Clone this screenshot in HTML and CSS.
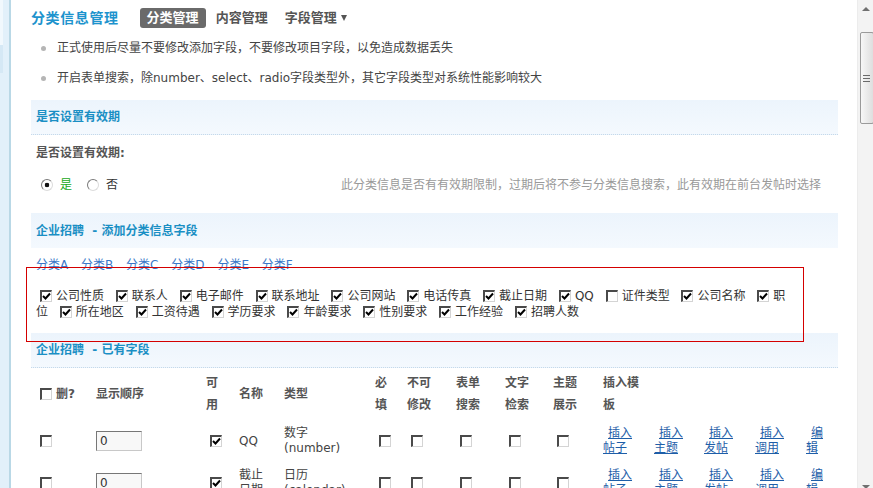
FILE: index.html
```html
<!DOCTYPE html>
<html lang="zh-CN">
<head>
<meta charset="UTF-8">
<title>分类信息管理</title>
<link rel="stylesheet" href="styles.css">
</head>
<body>
<div class="frame">
    <div class="side">
        <div class="side-a"></div>
        <div class="side-b"></div>
    </div>
    <div class="main">
        <div class="nav">
            <h3 class="title">分类信息管理</h3>
            <a class="tab tab-on" href="#">分类管理</a>
            <a class="tab" href="#">内容管理</a>
            <a class="tab" href="#">字段管理<span class="caret"></span></a>
        </div>
        <ul class="tips">
            <li>正式使用后尽量不要修改添加字段，不要修改项目字段，以免造成数据丢失</li>
            <li>开启表单搜索，除number、select、radio字段类型外，其它字段类型对系统性能影响较大</li>
        </ul>

        <div class="bar bar-first">是否设置有效期</div>
        <div class="setting">
            <div class="setting-label">是否设置有效期:</div>
            <div class="setting-row">
                <label class="radio yes"><input type="radio" name="expire" checked>是</label>
                <label class="radio"><input type="radio" name="expire">否</label>
                <span class="note">此分类信息是否有有效期限制，过期后将不参与分类信息搜索，此有效期在前台发帖时选择</span>
            </div>
        </div>

        <div class="bar bar-plain">企业招聘&nbsp; - 添加分类信息字段</div>
        <div class="subtabs">
            <a href="#">分类A</a>
            <a href="#">分类B</a>
            <a href="#">分类C</a>
            <a href="#">分类D</a>
            <a href="#">分类E</a>
            <a href="#">分类F</a>
        </div>
        <div class="fields">
            <label><input type="checkbox" checked>公司性质</label>
            <label><input type="checkbox" checked>联系人</label>
            <label><input type="checkbox" checked>电子邮件</label>
            <label><input type="checkbox" checked>联系地址</label>
            <label><input type="checkbox" checked>公司网站</label>
            <label><input type="checkbox" checked>电话传真</label>
            <label><input type="checkbox" checked>截止日期</label>
            <label><input type="checkbox" checked>QQ</label>
            <label><input type="checkbox">证件类型</label>
            <label><input type="checkbox" checked>公司名称</label>
            <label><input type="checkbox" checked>职位</label>
            <label><input type="checkbox" checked>所在地区</label>
            <label><input type="checkbox" checked>工资待遇</label>
            <label><input type="checkbox" checked>学历要求</label>
            <label><input type="checkbox" checked>年龄要求</label>
            <label><input type="checkbox" checked>性别要求</label>
            <label><input type="checkbox" checked>工作经验</label>
            <label><input type="checkbox" checked>招聘人数</label>
        </div>

        <div class="bar">企业招聘&nbsp; - 已有字段</div>
        <table class="fieldlist">
            <colgroup>
                <col style="width:56px"><col style="width:110px"><col style="width:33px">
                <col style="width:45px"><col style="width:91px"><col style="width:32px">
                <col style="width:49px"><col style="width:49px"><col style="width:48px">
                <col style="width:50px"><col style="width:51px"><col style="width:50px">
                <col style="width:51px"><col style="width:51px"><col style="width:36px">
            </colgroup>
            <tr>
                <th><input type="checkbox" class="cb-first">删?</th>
                <th>显示顺序</th>
                <th>可用</th>
                <th>名称</th>
                <th>类型</th>
                <th>必填</th>
                <th>不可修改</th>
                <th>表单搜索</th>
                <th>文字检索</th>
                <th>主题展示</th>
                <th class="th-tpl">插入模板</th>
                <th></th><th></th><th></th><th></th>
            </tr>
            <tr>
                <td><input type="checkbox" class="cb-first"></td>
                <td><input type="text" class="order" value="0"></td>
                <td><input type="checkbox" checked></td>
                <td>QQ</td>
                <td>数字(number)</td>
                <td><input type="checkbox"></td>
                <td><input type="checkbox"></td>
                <td><input type="checkbox"></td>
                <td><input type="checkbox"></td>
                <td><input type="checkbox"></td>
                <td class="lnk"><a href="#">插入帖子</a></td>
                <td class="lnk"><a href="#">插入主题</a></td>
                <td class="lnk"><a href="#">插入发帖</a></td>
                <td class="lnk"><a href="#">插入调用</a></td>
                <td class="lnk"><a href="#">编辑</a></td>
            </tr>
            <tr>
                <td><input type="checkbox" class="cb-first"></td>
                <td><input type="text" class="order" value="0"></td>
                <td><input type="checkbox" checked></td>
                <td>截止日期</td>
                <td>日历(calendar)</td>
                <td><input type="checkbox"></td>
                <td><input type="checkbox"></td>
                <td><input type="checkbox"></td>
                <td><input type="checkbox"></td>
                <td><input type="checkbox"></td>
                <td class="lnk"><a href="#">插入帖子</a></td>
                <td class="lnk"><a href="#">插入主题</a></td>
                <td class="lnk"><a href="#">插入发帖</a></td>
                <td class="lnk"><a href="#">插入调用</a></td>
                <td class="lnk"><a href="#">编辑</a></td>
            </tr>
        </table>
    </div>
</div>

<div class="mark"></div>

<div class="scroll">
    <span class="scroll-up"></span>
    <div class="thumb"><i></i><i></i><i></i></div>
    <span class="scroll-down"></span>
</div>
</body>
</html>
```

FILE: styles.css
```css
html, body {
    margin: 0;
    padding: 0;
}
body {
    width: 873px;
    height: 488px;
    overflow: hidden;
    position: relative;
    font: 12px "DejaVu Sans", "Noto Sans CJK SC", sans-serif;
    color: #333;
    background: #fff;
}
a {
    text-decoration: none;
}
.frame {
    display: flex;
    height: 488px;
}
.side {
    flex: none;
    width: 9px;
    background: #e2f0fa;
    border-right: 2px solid #b9d8e6;
}
.side-a {
    width: 3px;
    height: 45px;
    background: #f1f8fd;
}
.side-b {
    width: 3px;
    height: 28px;
    background: #d5e8f5;
}
.main {
    flex: 1;
    padding: 0 35px 0 20px;
}

/* 顶部导航 */
.nav {
    display: flex;
    align-items: center;
    height: 22px;
    padding-top: 7px;
}
.title {
    margin: 0 21px 0 0;
    font-size: 14px;
    letter-spacing: 0.6px;
    line-height: 22px;
    color: #1d93cd;
}
.tab {
    font-size: 13px;
    font-weight: bold;
    line-height: 20px;
    color: #555;
    padding: 0 7px;
    margin-right: 3px;
    border-radius: 3px;
}
.tab-on {
    background: #6a6a6a;
    color: #fff;
}
.caret {
    display: inline-block;
    border-left: 3px solid transparent;
    border-right: 3px solid transparent;
    border-top: 6px solid #555;
    margin-left: 4px;
    vertical-align: 1px;
}

/* 提示 */
.tips {
    list-style: none;
    margin: 4px 0 0;
    padding: 0;
}
.tips li {
    line-height: 30px;
    color: #444;
}
.tips li::before {
    content: "";
    display: inline-block;
    width: 5px;
    height: 5px;
    border-radius: 50%;
    background: #b5b5b5;
    margin: 0 11px 0 10px;
    vertical-align: middle;
}

/* 标题栏 */
.bar {
    height: 34px;
    line-height: 35px;
    padding-left: 5px;
    background: linear-gradient(#ecf4fc, #f4f9fe);
    border-bottom: 1px dotted #c5d9ea;
    color: #1a8fc4;
    font-weight: bold;
}
.bar-first {
    margin-top: 7px;
}
.bar-plain {
    height: 35px;
    line-height: 36px;
    border-bottom: none;
}

/* 有效期设置 */
.setting {
    padding: 8px 5px 18px;
}
.setting-label {
    line-height: 20px;
    font-weight: bold;
    color: #555;
}
.setting-row {
    display: flex;
    align-items: center;
    margin-top: 12px;
    line-height: 20px;
}
.radio {
    display: flex;
    align-items: center;
    margin-right: 15px;
}
.radio input {
    -webkit-appearance: none;
    appearance: none;
    box-sizing: border-box;
    width: 12px;
    height: 12px;
    margin: 0 7px 0 5px;
    border: 1px solid;
    border-color: #7a7a7a #dcdcdc #dcdcdc #7a7a7a;
    border-radius: 50%;
    background: #fff;
}
.radio + .radio input {
    margin-left: 0;
}
.radio input:checked {
    background: radial-gradient(circle, #111 0, #111 2px, #fff 2.6px);
}
.yes {
    color: #17a817;
}
.note {
    margin-left: auto;
    padding-right: 12px;
    color: #999;
}

/* 字段选择 */
.subtabs {
    margin-top: 7px;
    line-height: 20px;
    padding-left: 5px;
}
.subtabs a {
    color: #3a78c8;
    margin-right: 9px;
}
.fields {
    margin: 13px 0;
    padding: 0 42px 0 5px;
    line-height: 16px;
    color: #333;
}
.fields label {
    margin-right: 4px;
}
input[type="checkbox"] {
    -webkit-appearance: none;
    appearance: none;
    box-sizing: border-box;
    width: 12px;
    height: 12px;
    margin: 0 4px 0 4px;
    vertical-align: -2px;
    border-style: solid;
    border-width: 2px 1px 1px 2px;
    border-color: #4a4a4a #d4d4d4 #d4d4d4 #4a4a4a;
    background: #fff;
}
input[type="checkbox"]:checked {
    background: #fff url("data:image/svg+xml,%3Csvg xmlns='http://www.w3.org/2000/svg' width='9' height='9'%3E%3Cpath d='M1 4 L3.5 6.5 L8 1.5' fill='none' stroke='%23000' stroke-width='2'/%3E%3C/svg%3E") no-repeat 0 0;
}

/* 已有字段 */
.fieldlist {
    margin-left: 5px;
    width: 802px;
    table-layout: fixed;
    border-collapse: collapse;
}
.fieldlist th {
    text-align: left;
    font-weight: bold;
    color: #555;
    line-height: 22px;
    padding: 4px 12px 4px 4px;
    vertical-align: middle;
}
.fieldlist .th-tpl {
    padding-right: 6px;
}
.fieldlist td {
    line-height: 15px;
    padding: 6px 12px 6px 4px;
    vertical-align: middle;
    color: #444;
}
.fieldlist input.cb-first {
    margin-left: 0;
}
.fieldlist .lnk {
    padding-right: 8px;
    text-indent: 5px;
}
.lnk a {
    color: #1e5ea8;
    text-decoration: underline;
}
.order {
    box-sizing: border-box;
    width: 46px;
    height: 20px;
    padding: 0 3px;
    border: 1px solid;
    border-color: #777 #c8c8c8 #c8c8c8 #777;
    background: #f8f8f8;
    font: 12px "DejaVu Sans", sans-serif;
    color: #333;
    vertical-align: middle;
}

/* 红框标注 */
.mark {
    position: absolute;
    left: 26px;
    top: 267px;
    width: 776px;
    height: 73px;
    border: 1px solid #d40000;
}

/* 滚动条 */
.scroll {
    position: absolute;
    top: 0;
    right: 0;
    box-sizing: border-box;
    width: 16px;
    height: 488px;
    background: #f3f3f3;
    border-left: 1px solid #ececec;
    display: flex;
    flex-direction: column;
    align-items: center;
}
.scroll-up {
    margin-top: 7px;
    border-left: 4px solid transparent;
    border-right: 4px solid transparent;
    border-bottom: 4px solid #707070;
}
.thumb {
    box-sizing: border-box;
    width: 14px;
    height: 92px;
    margin-top: 21px;
    margin-left: 2px;
    border: 1px solid #9a9a9a;
    border-radius: 2px;
    background: linear-gradient(to right, #f7f7f7, #dedede);
    display: flex;
    flex-direction: column;
    justify-content: center;
    align-items: center;
    gap: 2px;
}
.thumb i {
    display: block;
    width: 7px;
    height: 1px;
    background: #6a6a6a;
}
.scroll-down {
    margin-top: auto;
    margin-bottom: -1px;
    border-left: 4px solid transparent;
    border-right: 4px solid transparent;
    border-top: 4px solid #707070;
}
```
